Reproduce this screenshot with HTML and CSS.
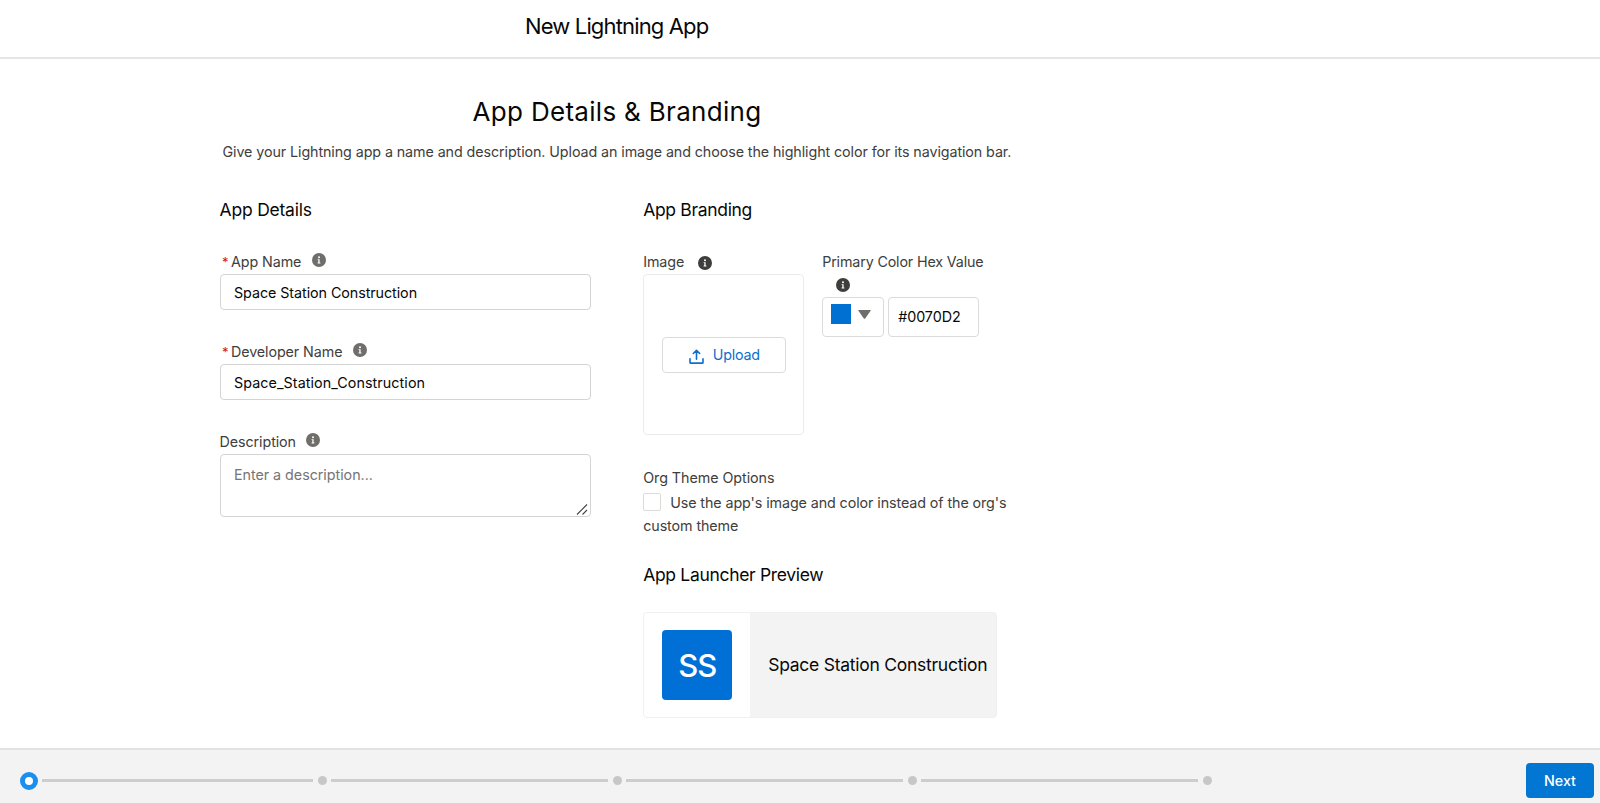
FILE: index.html
```html
<!DOCTYPE html>
<html lang="en">
<head>
<meta charset="utf-8">
<title>New Lightning App</title>
<link rel="stylesheet" href="styles.css">
</head>
<body>
<svg class="defs" width="0" height="0">
  <symbol id="info" viewBox="0 0 14 14">
    <circle cx="7" cy="7" r="7" fill="currentColor"/>
    <circle cx="7" cy="4.2" r="1" fill="#fff"/>
    <path d="M5.6 6.2h2v3.3h.8v.9H5.6v-.9h.7V7.1h-.7z" fill="#fff"/>
  </symbol>
</svg>
<header class="header"><h1 class="title">New Lightning App</h1></header>
<main class="content">
  <h2 class="heading">App Details &amp; Branding</h2>
  <p class="intro">Give your Lightning app a name and description. Upload an image and choose the highlight color for its navigation bar.</p>
  <div class="columns">
    <section class="details">
      <h3 class="section-title">App Details</h3>
      <div class="field">
        <div class="label required"><span class="star">*</span><span>App Name</span><svg class="info"><use href="#info"/></svg></div>
        <div class="input">Space Station Construction</div>
      </div>
      <div class="field">
        <div class="label required"><span class="star">*</span><span>Developer Name</span><svg class="info"><use href="#info"/></svg></div>
        <div class="input devname">Space_Station_Construction</div>
      </div>
      <div class="field">
        <div class="label"><span>Description</span><svg class="info"><use href="#info"/></svg></div>
        <div class="input area"><span>Enter a description...</span>
          <svg class="grip" viewBox="0 0 12 12"><path d="M1 11.500L11 1.500M6.500 11.500L11 7" stroke="#444" stroke-width="1.1" fill="none"/></svg>
        </div>
      </div>
    </section>
    <section class="branding">
      <h3 class="section-title">App Branding</h3>
      <div class="brand-row">
        <div class="image-col">
          <div class="label"><span>Image</span><svg class="info dark"><use href="#info"/></svg></div>
          <div class="drop">
            <div class="upload">
              <svg class="upload-icon" viewBox="0 0 15 15" fill="none" stroke="currentColor" stroke-width="1.6" stroke-linecap="round" stroke-linejoin="round"><path d="M1 9.800v3.600q0 .7.7.7h11.600q.7 0 .7-.7V9.800M7.500 10.300V1.800M4.300 4.500L7.500 1.400L10.700 4.500"/></svg>
              <span>Upload</span>
            </div>
          </div>
        </div>
        <div class="color-col">
          <div class="label"><span>Primary Color Hex Value</span></div>
          <svg class="info dark below"><use href="#info"/></svg>
          <div class="pickers">
            <div class="picker"><span class="swatch"></span><svg class="caret" viewBox="0 0 13 9"><path d="M.5 0h12q.6 0 .2.600L7.200 8.400q-.7.900-1.400 0L.3.600Q0 0 .5 0z" fill="#706e6b"/></svg></div>
            <div class="hex">#0070D2</div>
          </div>
        </div>
      </div>
      <div class="theme-label">Org Theme Options</div>
      <div class="theme-option"><span class="checkbox"></span><span class="option-text">Use the app's image and color instead of the org's</span><br><span class="option-rest">custom theme</span></div>
      <h3 class="section-title preview-title">App Launcher Preview</h3>
      <div class="card">
        <div class="card-logo"><div class="tile">SS</div></div>
        <div class="card-name">Space Station Construction</div>
      </div>
    </section>
  </div>
</main>
<footer class="footer">
  <div class="progress">
    <span class="step active"></span><span class="line"></span>
    <span class="step"></span><span class="line"></span>
    <span class="step"></span><span class="line"></span>
    <span class="step"></span><span class="line"></span>
    <span class="step"></span>
  </div>
  <div class="next">Next</div>
</footer>
</body>
</html>
```
FILE: styles.css
```css
* { box-sizing: border-box; }
body { margin: 0; width: 1600px; height: 803px; overflow: hidden; display: flex; flex-direction: column; background: #fff; color: #3e3e3c; font: 14.3px/20px Inter, "Liberation Sans", sans-serif; letter-spacing: -0.09px; white-space: nowrap; }
h1, h2, h3, p { margin: 0; font-weight: 400; color: #080707; }
.defs { position: absolute; }
.header { height: 59px; border-bottom: 2px solid #e5e5e5; padding: 10px 0 0 525px; }
.title { font-size: 22px; line-height: 32px; letter-spacing: -0.85px; }
.content { height: 689px; padding: 37px 0 0 219.600px; display: flex; flex-direction: column; }
.heading { padding-left: 253px; font-size: 26px; line-height: 32px; letter-spacing: 0.3px; }
.intro { margin: 14px 0 0 2.900px; color: #3e3e3c; line-height: 20px; }
.columns { display: flex; margin-top: 36px; }
.details { width: 371px; }
.branding { margin-left: 52.600px; width: 380px; }
.section-title { font-size: 17.500px; line-height: 24px; letter-spacing: -0.32px; }
.details .section-title { letter-spacing: -0.22px; }
.label { display: flex; height: 20px; margin-bottom: 2px; }
.field { height: 90px; }
.section-title + .field, .section-title + .brand-row { margin-top: 30px; }
.star { width: 9px; margin-left: 2.400px; color: #d3122e; font-size: 13px; letter-spacing: 0; }
.info { width: 14px; height: 14px; margin: 1px 0 0 10.500px; color: #706e6b; }
.info.dark { color: #3e3e3c; margin: 3.500px 0 0 13.500px; }
.input { height: 36px; border: 1px solid #d4d4d4; border-radius: 4px; padding: 8px 13.400px; color: #080707; letter-spacing: -0.06px; }
.devname { letter-spacing: 0.08px; }
.area { height: 63px; position: relative; padding-top: 10px; color: #757575; letter-spacing: -0.03px; }
.grip { position: absolute; right: 2px; bottom: 1px; width: 12px; height: 12px; }
.brand-row { display: flex; height: 183px; }
.image-col { width: 161px; margin-right: 18px; }
.drop { width: 161px; height: 161px; border: 1px solid #ececec; border-radius: 4px; display: flex; align-items: center; justify-content: center; }
.upload { width: 124px; height: 36px; border: 1px solid #dddbda; border-radius: 4px; color: #0b6fd0; display: flex; padding: 7px 0 0 26px; gap: 9px; letter-spacing: -0.2px; }
.upload-icon { width: 15px; height: 15px; margin-top: 4.500px; }
.info.below { display: block; margin: 6px 0 4.600px 13.500px; }
.color-col .label { margin: 0; letter-spacing: -0.15px; }
.pickers { display: flex; gap: 4px; }
.picker { width: 62px; height: 40px; border: 1px solid #dddbda; border-radius: 4px; display: flex; padding: 6px 0 0 8px; gap: 7px; }
.swatch { width: 20px; height: 20px; background: #0070d2; }
.caret { width: 13px; height: 9px; margin-top: 6px; }
.hex { width: 91px; height: 40px; border: 1px solid #dddbda; border-radius: 4px; padding: 9px 9px; color: #080707; letter-spacing: -0.05px; }
.theme-label { margin-top: 32.500px; letter-spacing: -0.05px; }
.theme-option { line-height: 23px; margin-top: 3.500px; }
.checkbox { display: inline-block; width: 18px; height: 18px; margin-right: 9px; border: 1px solid #dddbda; border-radius: 2px; vertical-align: -3px; }
.preview-title { margin-top: 26px; }
.card { display: flex; width: 354px; height: 106px; margin-top: 25px; border: 1px solid #f0f0f0; border-radius: 4px; background: #f3f3f3; overflow: hidden; }
.card-logo { width: 106px; background: #fff; padding: 17px 0 0 18px; }
.tile { width: 70px; height: 70px; border-radius: 4px; background: #0070d7; color: #fff; font-size: 31px; line-height: 72px; text-align: center; letter-spacing: -1px; font-weight: 500; }
.card-name { padding: 39px 0 0 18px; font-size: 17.500px; line-height: 26px; letter-spacing: -0.26px; color: #080707; }
.footer { height: 55px; border-top: 2px solid #e2e2e2; background: #f3f3f3; display: flex; justify-content: space-between; padding-right: 6px; }
.progress { display: flex; align-items: center; height: 61px; padding-left: 19.600px; }
.step { width: 9px; height: 9px; border-radius: 50%; background: #c9c7c5; }
.step.active { width: 18px; height: 18px; border: 5px solid #1b8ff0; background: #fff; }
.line { width: 277px; height: 3px; margin: 0 4.500px; background: #cfcdcc; }
.active + .line { width: 271.900px; margin-left: 4px; }
.next { width: 68px; height: 35px; margin-top: 13px; border-radius: 4px; background: #0176d3; color: #fff; text-align: center; line-height: 35px; font-weight: 500; letter-spacing: 0; }
```
